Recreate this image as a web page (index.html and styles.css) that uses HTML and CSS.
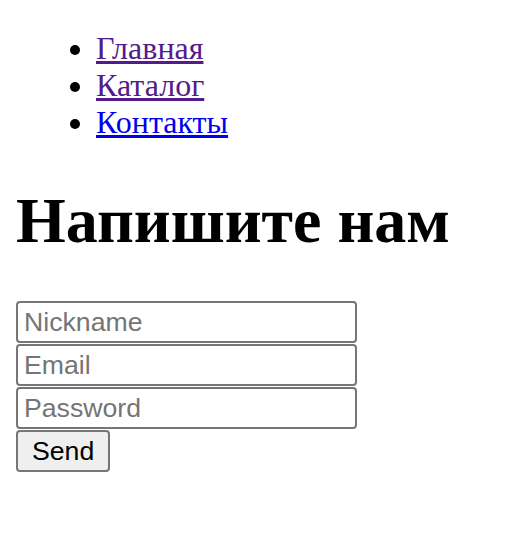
FILE: index.html
```html
<!DOCTYPE html>
<html lang="ru">
<head>
<meta charset="utf-8">
<title>Напишите нам</title>
<link rel="stylesheet" href="styles.css">
</head>
<body>
<nav>
<ul class="menu">
<li><a class="visited" href="#main">Главная</a></li>
<li><a class="visited" href="#catalog">Каталог</a></li>
<li><a class="link" href="#contacts">Контакты</a></li>
</ul>
</nav>
<h1 class="title">Напишите нам</h1>
<form class="form">
<input class="field" type="text" placeholder="Nickname">
<input class="field" type="email" placeholder="Email">
<input class="field" type="password" placeholder="Password">
<button class="send" type="button">Send</button>
</form>
</body>
</html>
```
FILE: styles.css
```css
html, body {
  background: #fff;
}
body {
  margin: 30px 16px 16px;
  font-family: "Liberation Serif", "Times New Roman", serif;
  font-size: 32px;
  color: #000;
}
.menu {
  margin: 0 0 32px;
  padding-left: 80px;
  list-style: disc;
}
.visited {
  color: #551a8b;
}
.link {
  color: #0000ee;
}
.title {
  font-size: 64px;
  font-weight: bold;
  margin: 43px 0;
}
.form {
  display: flex;
  flex-direction: column;
  align-items: flex-start;
}
.field {
  box-sizing: border-box;
  width: 341px;
  height: 42px;
  margin: 0 0 1px;
  padding: 2px 6px;
  border: 2px solid #767676;
  border-radius: 4px;
  font-family: "Liberation Sans", Arial, sans-serif;
  font-size: 26.67px;
  color: #000;
  background: #fff;
}
.field::placeholder {
  color: #757575;
}
.send {
  box-sizing: border-box;
  height: 42px;
  padding: 2px 14px;
  border: 2px solid #767676;
  border-radius: 4px;
  background: #efefef;
  font-family: "Liberation Sans", Arial, sans-serif;
  font-size: 26.67px;
  color: #000;
}
```
